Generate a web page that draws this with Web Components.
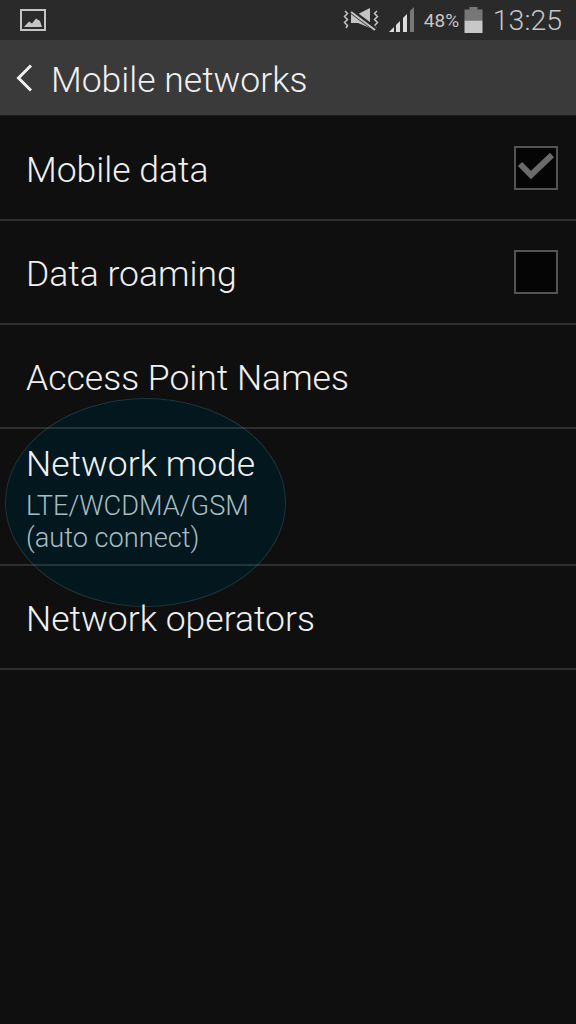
<!DOCTYPE html>
<html>
<head>
<meta charset="utf-8">
<title>Mobile networks</title>
<style>
  html { background: #0f0f0f; }
  html, body { margin: 0; padding: 0; }
  body { width: 576px; height: 1024px; overflow: hidden; font-family: Roboto, "Liberation Sans", sans-serif; font-weight: 300; }
</style>
</head>
<body>
<phone-screen>
  <status-bar></status-bar>
  <action-bar>Mobile networks</action-bar>
  <settings-list>
    <setting-row check="on">Mobile data</setting-row>
    <setting-row check="off">Data roaming</setting-row>
    <setting-row>Access Point Names</setting-row>
    <setting-row highlight summary="LTE/WCDMA/GSM (auto connect)">Network mode</setting-row>
    <setting-row>Network operators</setting-row>
  </settings-list>
</phone-screen>

<script>
class PhoneScreen extends HTMLElement {
  constructor() {
    super();
    this.attachShadow({ mode: "open" });
    this.shadowRoot.innerHTML = `
      <style>
        :host { display: flex; flex-direction: column; width: 576px; height: 1024px; color: #fff; }
      </style>
      <slot></slot>
    `;
  }
}

class StatusBar extends HTMLElement {
  constructor() {
    super();
    this.attachShadow({ mode: "open" });
    this.shadowRoot.innerHTML = `
      <style>
        :host { display: flex; align-items: center; height: 40px; padding: 0 14px 0 20px; background: #2a2a2a; color: #c4c4c4; }
        .right { display: flex; align-items: center; margin-left: auto; }
        svg { display: block; }
        .pct { font-size: 19px; font-weight: 400; margin-left: 9px; width: 40px; }
        .time { font-size: 28.5px; font-weight: 300; margin-left: 10px; }
      </style>
      <svg width="26" height="23" viewBox="0 0 26 23">
        <rect x="1" y="1" width="24" height="20" fill="none" stroke="#c4c4c4" stroke-width="2"/>
        <path d="M4 18 L9 12.5 L12 14.5 L16 9.5 L20 12 L22 18 Z" fill="#c4c4c4"/>
      </svg>
      <div class="right">
        <svg width="38" height="26" viewBox="0 0 38 26" fill="none" stroke="#c4c4c4">
          <path d="M2 4 L4.5 6.5 L1.5 9.5 L4.5 12.5 L1.5 15.5 L4.5 18.5 L3 21" stroke-width="1.5"/>
          <path d="M34 4 L31.5 6.5 L34.5 9.5 L31.5 12.5 L34.5 15.5 L31.5 18.5 L33 21" stroke-width="1.5"/>
          <path d="M8 7 H15 L27 1 V21 L15 16 H8 Z" fill="#c4c4c4" stroke="none"/>
          <path d="M8 4 L32 22" stroke="#2a2a2a" stroke-width="5"/>
          <path d="M8 5 L32 23" stroke-width="2"/>
        </svg>
        <svg style="margin-left:8px" width="26" height="26" viewBox="0 0 26 26">
          <path d="M0 25 L5 20 V25 Z" fill="#dcdcdc"/>
          <path d="M7 18 L11 14 V25 H7 Z" fill="#dcdcdc"/>
          <path d="M14 11 L18 7 V25 H14 Z" fill="#dcdcdc"/>
          <path d="M21 4 L25 0 V25 H21 Z" fill="#777"/>
        </svg>
        <span class="pct">48%</span>
        <svg width="19" height="26" viewBox="0 0 19 26">
          <rect x="5.5" y="0" width="8" height="3" fill="#777"/>
          <rect x="0.5" y="2.5" width="18" height="11" fill="#777"/>
          <rect x="0.5" y="13.5" width="18" height="12.5" fill="#c8c8c8"/>
        </svg>
        <span class="time">13:25</span>
      </div>
    `;
  }
}

class ActionBar extends HTMLElement {
  constructor() {
    super();
    this.attachShadow({ mode: "open" });
    this.shadowRoot.innerHTML = `
      <style>
        :host { display: flex; align-items: center; height: 76px; padding: 0 0 0 16px; background: #3a3a3a; box-sizing: border-box; border-bottom: 1px solid #1c1c1c; color: #f0f0f0; font-size: 35.5px; font-weight: 300; }
        svg { display: block; margin-right: 18px; }
        .title { padding-top: 4px; }
      </style>
      <svg width="17" height="28" viewBox="0 0 17 28" fill="none">
        <path d="M15 1.5 L2.5 14 L15 26.5" stroke="#f0f0f0" stroke-width="3"/>
      </svg>
      <div class="title"><slot></slot></div>
    `;
  }
}

class SettingsList extends HTMLElement {
  constructor() {
    super();
    this.attachShadow({ mode: "open" });
    this.shadowRoot.innerHTML = `
      <style>
        :host { display: flex; flex-direction: column; flex: 1; padding-top: 1px; }
      </style>
      <slot></slot>
    `;
  }
}

class SettingRow extends HTMLElement {
  constructor() {
    super();
    this.attachShadow({ mode: "open" });
  }
  connectedCallback() {
    const check = this.getAttribute("check");
    const summary = this.getAttribute("summary");
    const hl = this.hasAttribute("highlight");
    this.shadowRoot.innerHTML = `
      <style>
        :host { display: flex; position: relative; align-items: center; min-height: 104px; box-sizing: border-box; padding: 0 18px 0 26px; border-bottom: 2px solid rgba(255, 255, 255, .13); color: #f0f0f0; font-size: 35.5px; font-weight: 300; }
        :host([highlight]) { min-height: 137px; align-items: flex-start; padding-top: 10px; }
        .text { flex: 1; }
        .title { line-height: 42px; padding-top: 4px; }
        .summary { width: 250px; color: #a9bcc2; font-size: 27.2px; line-height: 32px; margin-top: 5px; }
        .box { width: 40px; height: 40px; background: #050505; border: 2px solid #555; }
        .box svg { display: block; margin: 5px 0 0 1px; }
        .glow { position: absolute; z-index: -1; left: 5px; top: -31px; width: 281px; height: 209px; border-radius: 50%; box-sizing: border-box; background: #02171e; border: 1px solid #1f3439; }
      </style>
      ${hl ? `<div class="glow"></div>` : ""}
      <div class="text">
        <div class="title"><slot></slot></div>
        ${summary ? `<div class="summary">${summary}</div>` : ""}
      </div>
      ${check ? `<div class="box">${check === "on" ? `<svg width="38" height="30" viewBox="0 0 38 30"><path d="M3 11 L14 22 L35 2" fill="none" stroke="#6b6b6b" stroke-width="6"/></svg>` : ""}</div>` : ""}
    `;
  }
}

customElements.define("phone-screen", PhoneScreen);
customElements.define("status-bar", StatusBar);
customElements.define("action-bar", ActionBar);
customElements.define("settings-list", SettingsList);
customElements.define("setting-row", SettingRow);
</script>
</body>
</html>
